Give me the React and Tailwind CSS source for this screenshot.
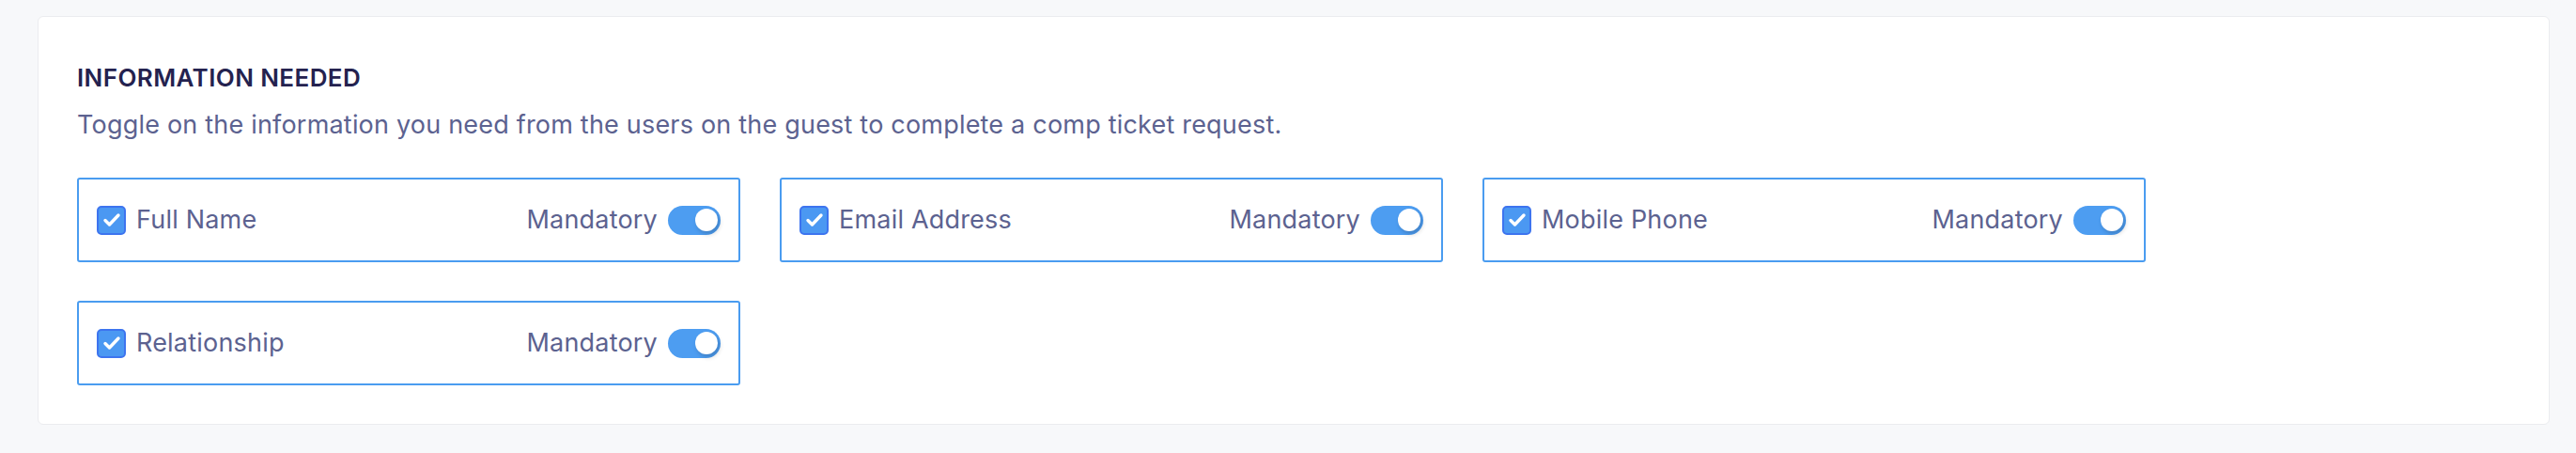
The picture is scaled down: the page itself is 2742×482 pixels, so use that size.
import React from 'react'

const fields = ['Full Name', 'Email Address', 'Mobile Phone', 'Relationship'];

function Checkbox() {
  return (
    <span className="flex items-center justify-center w-[31px] h-[31px] rounded-[5px] bg-[#4b98f2] border-2 border-[#3d74ef] shrink-0">
      <svg viewBox="0 0 24 24" className="w-[24px] h-[24px]" fill="none" stroke="white" strokeWidth="3.4" strokeLinecap="round" strokeLinejoin="round">
        <path d="M5 12.5l4.5 4.5L19 7" />
      </svg>
    </span>
  );
}

function Toggle() {
  return (
    <span className="relative block w-[56px] h-[31px] rounded-full bg-[#4d9df1] shrink-0">
      <span className="absolute right-[3px] top-[3.5px] w-[24px] h-[24px] rounded-full bg-white shadow-[2px_3px_5px_rgba(0,0,0,0.18)]" />
    </span>
  );
}

function FieldBox({ label }) {
  return (
    <div className="w-[706px] h-[90px] border-2 border-[#4a9cf0] rounded-[3px] flex items-center pl-[19px] pr-[19px]">
      <Checkbox />
      <span className="ml-[11px] text-[27px] leading-[32px] tracking-[0.2px] text-[#5c6290]">{label}</span>
      <span className="ml-auto text-[27px] leading-[32px] tracking-[0.2px] text-[#5c6290]">Mandatory</span>
      <span className="ml-[11px]">
        <Toggle />
      </span>
    </div>
  );
}

export default function App() {
  return (
    <div className="min-h-[482px] bg-[#f7f8fa] pt-[17px] pl-[40px] pr-[28px] pb-[29px] font-['Inter',sans-serif]">
      <div className="bg-white border border-[#ebecef] rounded-[6px] pl-[41px] pr-[41px] pt-[49px] pb-[41px]">
        <h2 className="text-[26px] leading-[32px] font-semibold uppercase tracking-[0.4px] text-[#24224f]">Information Needed</h2>
        <p className="mt-[18px] text-[27px] leading-[32px] tracking-[0.2px] text-[#5c6290]">
          Toggle on the information you need from the users on the guest to complete a comp ticket request.
        </p>
        <div className="mt-[40px] flex flex-wrap gap-x-[42px] gap-y-[41px]">
          {fields.map((f) => (
            <FieldBox key={f} label={f} />
          ))}
        </div>
      </div>
    </div>
  );
}
